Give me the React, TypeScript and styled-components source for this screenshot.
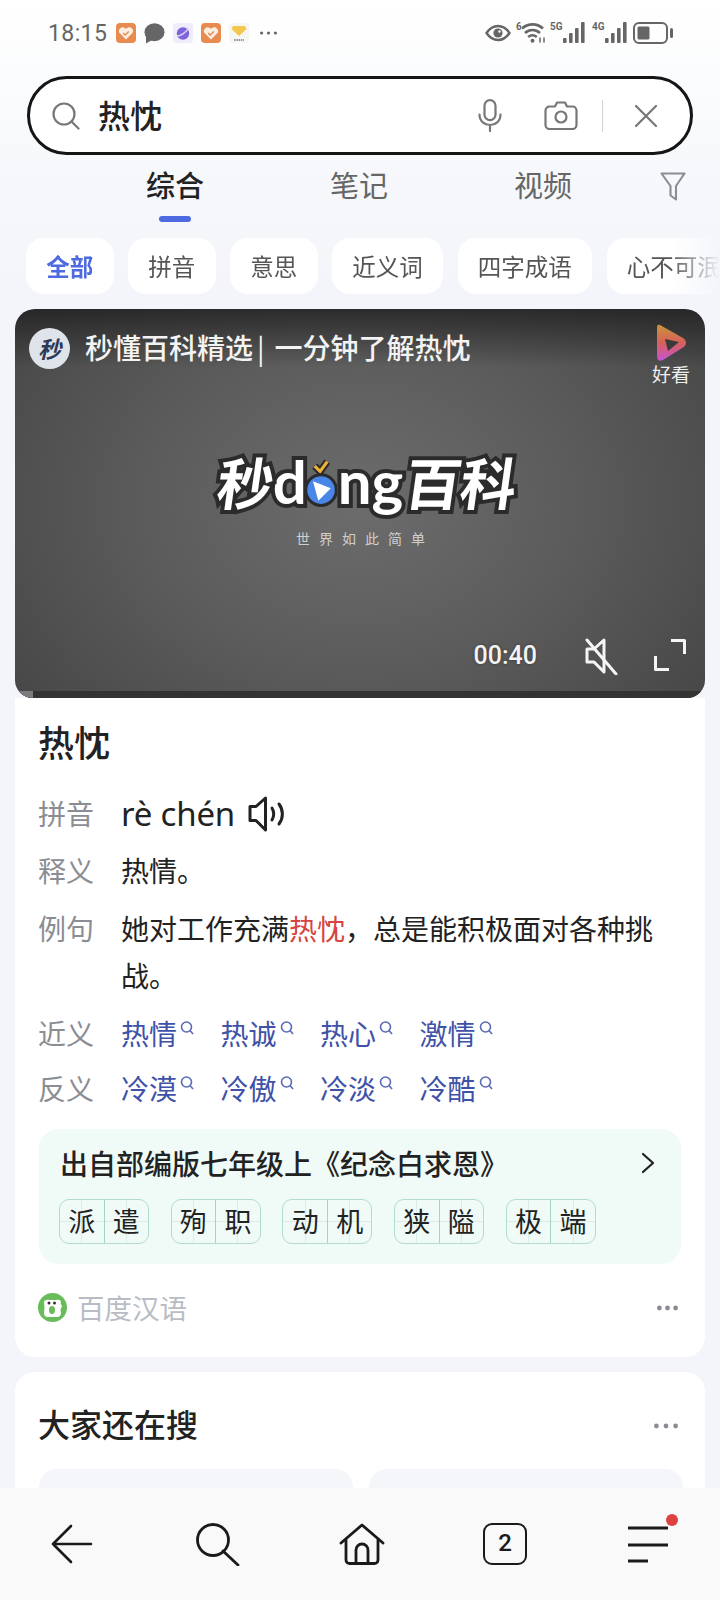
import React from "react";
import styled, { createGlobalStyle } from "styled-components";

const Global = createGlobalStyle`
  html, body { margin: 0; padding: 0; background: #f4f6fa; }
  body { font-family: "Noto Sans CJK SC", "Liberation Sans", sans-serif; text-spacing-trim: space-all; }
  * { box-sizing: border-box; }
  svg { display: block; flex: none; }
`;

const Screen = styled.div`
  width: 720px; height: 1600px; display: flex; flex-direction: column; overflow: hidden;
  background: linear-gradient(180deg, #ffffff 0, #f6f8fb 170px, #f3f5fa 300px);
`;
const Main = styled.main`flex: 1; min-height: 0; overflow: hidden;`;

const StatusBar = styled.div`
  height: 66px; display: flex; align-items: center; justify-content: space-between; padding: 0 47px 0 48px;
`;
const StatusGroup = styled.div`display: flex; align-items: center; gap: ${p => p.$gap ?? 8}px;`;
const Clock = styled.span`font: 400 23px Roboto, sans-serif; color: #666; letter-spacing: .4px; margin-right: 1px;`;
const DotsGap = styled.span`margin-left: 3px;`;
const NetLabel = styled.span`
  font: 700 10px/10px Roboto, sans-serif; color: #666; align-self: flex-start; margin: 0 1px 0 0; width: ${p => p.$w}px;
`;
const NetCell = styled.div`display: flex; align-items: flex-start; height: 22px; margin-left: ${p => p.$ml}px;`;
const BatterySlot = styled.span`margin-left: 6px;`;

const SearchBar = styled.div`
  margin: 10px 27px 0; height: 79px; border: 3.5px solid #151515; border-radius: 40px; background: #fff;
  display: flex; align-items: center; padding: 0 32px 0 22px;
`;
const SearchText = styled.span`
  font-size: 32px; font-weight: 500; color: #222; margin: 0 0 3px 18px; flex: 1; line-height: 40px;
`;
const CameraSlot = styled.span`margin-left: 42px;`;
const SearchDivider = styled.span`width: 1.5px; height: 32px; background: #d4d4d4; margin: 0 31px 0 24px;`;

const Tabs = styled.nav`display: flex; padding-left: 83px; height: 69px;`;
const Tab = styled.div`
  width: 184px; display: flex; flex-direction: column; align-items: center;
  font-size: 29px; line-height: 40px; padding-top: 9px; font-weight: ${p => (p.$active ? 500 : 400)};
  color: ${p => (p.$active ? "#222" : "#666")};
`;
const TabMark = styled.span`width: 32px; height: 6px; border-radius: 3px; background: #4e6ae0; margin-top: 12px;`;
const FilterSlot = styled.div`padding: 17px 0 0 25px;`;

const Chips = styled.div`
  display: flex; gap: 14.5px; padding-left: 26px; margin-top: 14px; overflow: hidden; white-space: nowrap;
  -webkit-mask-image: linear-gradient(90deg, #000 670px, transparent 720px);
  mask-image: linear-gradient(90deg, #000 670px, transparent 720px);
`;
const Chip = styled.div`
  flex: none; height: 56px; border-radius: 18px; background: #fff; padding: 0 20.25px; font-size: 23.5px; line-height: 56px;
  font-weight: ${p => (p.$active ? 700 : 400)}; color: ${p => (p.$active ? "#4e6ae0" : "#555")};
`;

const Video = styled.section`
  margin: 15px 15px 0; height: 389px; border-radius: 20px 20px 18px 18px; overflow: hidden; display: flex; flex-direction: column;
  background:
    linear-gradient(180deg, rgba(25,25,25,.7) 0, rgba(25,25,25,0) 58px),
    radial-gradient(ellipse 420px 320px at 50% 50%, #6c6c6c 0, #5c5c5c 50%, #484848 100%);
`;
const VideoHead = styled.div`height: 137px; display: flex; align-items: flex-start; padding: 19px 15px 0 14px;`;
const Avatar = styled.div`
  width: 41px; height: 41px; border-radius: 50%; background: #dfe3ea; color: #2d3a55; font-size: 23px; font-weight: 700;
  font-style: italic; line-height: 41px; text-align: center; flex: none;
`;
const VideoTitle = styled.div`
  flex: 1; color: #f3f3f3; font-size: 28px; line-height: 38px; font-weight: 500; margin-left: 15px; white-space: nowrap;
`;
const TitleBar = styled.span`margin: 0 10px 0 4px; font-weight: 400;`;
const Haokan = styled.div`
  width: 38px; margin: -4px 0 0 0; display: flex; flex-direction: column; align-items: center;
  color: #eee; font-size: 19px; line-height: 24px;
`;
const VideoCenter = styled.div`flex: 1; display: flex; flex-direction: column; align-items: center;`;
const Logo = styled.div`
  display: flex; align-items: center; height: 70px; margin-left: 14px;
  font-weight: 700; color: #fff; paint-order: stroke fill; -webkit-text-stroke: 8px #2b2b2b;
`;
const LogoCjk = styled.span`font-size: 56px; line-height: 70px; letter-spacing: -1px; transform: skewX(-8deg); display: inline-block;`;
const LogoLatin = styled.span`
  font: 700 60px/70px Lato, sans-serif; letter-spacing: 0; margin: ${p => p.$m}; display: inline-block;
`;
const Tagline = styled.div`
  margin: 12px 0 0 10px; color: #cfcfcf; font-size: 14px; line-height: 20px; letter-spacing: 9px;
`;
const Controls = styled.div`height: 54px; display: flex; align-items: flex-start; padding: 0 19px 0 0; justify-content: flex-end;`;
const Duration = styled.span`
  font: 500 25px/38px Roboto, sans-serif; color: #f4f4f4; margin-right: 47px; text-shadow: 0 0 3px rgba(0,0,0,.4);
`;
const FullscreenSlot = styled.span`margin: 2px 0 0 36px;`;
const ProgressTrack = styled.div`height: 7px; background: #333; flex: none;`;
const ProgressFill = styled.div`height: 100%; background: #7c7c7c;`;

const Card = styled.section`
  margin: 0 15px; padding: 18px 24px 35px; background: #fff; border-radius: 0 0 20px 20px;
`;
const WordTitle = styled.h1`margin: 0 0 0 -1px; font-size: 36px; line-height: 50px; font-weight: 500; color: #222;`;
const Row = styled.div`display: flex; margin: ${p => p.$top}px 0 0 -1px; font-size: 28px; line-height: 47px; color: #222;`;
const Label = styled.span`width: 83px; flex: none; color: #8a8d93;`;
const Pinyin = styled.span`font: 400 33px/47px "Noto Sans", sans-serif; color: #222; letter-spacing: -.2px;`;
const SpeakerSlot = styled.span`margin: 6px 0 0 13px;`;
const Value = styled.div`width: 540px;`;
const Hot = styled.span`color: #d6453f;`;
const LinkItem = styled.span`width: 99.5px; display: flex; color: #4052a8; flex: none;`;
const LinkMark = styled.span`margin: 11px 0 0 3px;`;

const Source = styled.div`
  margin-top: 17px; height: 135px; border-radius: 20px; background: #f0faf7; padding: 14px 20px 0 21px;
`;
const SourceHead = styled.div`
  display: flex; align-items: center; justify-content: space-between; font-size: 28px; line-height: 40px;
  font-weight: 500; color: #222; padding-right: 6px;
`;
const WordList = styled.div`display: flex; gap: 21.7px; margin: 16px 0 0 -1px;`;
const WordBox = styled.div`
  width: 90px; height: 45px; border: 1.3px solid #b1dccf; border-radius: 10px; display: flex; overflow: hidden;
`;
const WordCell = styled.span`
  flex: 1; text-align: center; font-size: 27px; line-height: 41px; color: #222;
  background:
    linear-gradient(#d9ece6, #d9ece6) 0 50% / 100% 1px no-repeat,
    linear-gradient(#d9ece6, #d9ece6) 50% 0 / 1px 100% no-repeat;
  &:first-child { border-right: 1.3px solid #a5d3c5; }
`;

const Attribution = styled.div`display: flex; align-items: center; justify-content: space-between; margin-top: 29px; height: 29px; padding-right: 3px;`;
const AttrLeft = styled.div`display: flex; align-items: center; gap: 10px; margin-left: -1px; color: #b8bcc4; font-size: 27.5px; line-height: 27px;`;

const SecondCard = styled.section`
  margin: 15px 15px 0; padding: 31px 24px 0; background: #fff; border-radius: 20px 20px 0 0;
`;
const SecondHead = styled.div`display: flex; align-items: center; justify-content: space-between;`;
const SecondTitle = styled.h2`margin: 0 0 0 -1px; font-size: 32px; line-height: 40px; font-weight: 500; color: #222;`;
const HeadDots = styled.span`padding: 5px 3px 0 0;`;
const Suggest = styled.div`display: grid; grid-template-columns: 314px 314px; gap: 16px; margin-top: 26px;`;
const SuggestCard = styled.div`height: 120px; border-radius: 18px; background: #f5f6fa;`;

const BottomNav = styled.nav`
  height: 112px; flex: none; background: #f9f9f9; display: grid; grid-template-columns: repeat(5, 144px); align-items: center; justify-items: center;
`;
const NavSlot = styled.span`margin-left: ${p => p.$ml}px;`;

const HeartTile = () => (
  <svg width="20" height="20" viewBox="0 0 20 20">
    <rect width="20" height="20" rx="4" fill="#e88b4f" />
    <path d="M10 16.5 3.8 10.3a3.7 3.7 0 0 1 5.2-5.2l1 1 1-1a3.7 3.7 0 0 1 5.2 5.2z" fill="#fbeee3" />
    <path d="m7.2 10 2 2 3.6-3.6" fill="none" stroke="#e88b4f" strokeWidth="1.4" />
  </svg>
);
const Bubble = () => (
  <svg width="21" height="21" viewBox="0 0 21 21">
    <ellipse cx="10.5" cy="9.2" rx="10" ry="9" fill="#666" />
    <path d="M2 13v7.5L8 17z" fill="#666" />
  </svg>
);
const PlanetTile = () => (
  <svg width="20" height="20" viewBox="0 0 20 20">
    <rect width="20" height="20" rx="4" fill="#efedfb" />
    <circle cx="10" cy="10.5" r="6.2" fill="#7d63dc" />
    <path d="M4 13c4 0 8-3 11.5-7.5" stroke="#d9d0fa" strokeWidth="1.4" fill="none" />
  </svg>
);
const GemTile = () => (
  <svg width="20" height="20" viewBox="0 0 20 20">
    <rect width="20" height="20" rx="4" fill="#f6f6f2" />
    <path d="M4 3h12l1.5 3L10 13 2.500 6z" fill="#f4c84e" />
    <path d="M5 17h10" stroke="#6d7590" strokeWidth="1.4" strokeDasharray="1.5 .8" />
  </svg>
);
const Dots = ({ w = 17, c = "#666", r = 1.6 }: { w?: number; c?: string; r?: number }) => (
  <svg width={w} height="6" viewBox={`0 0 ${w} 6`}>
    <circle cx={r} cy="3" r={r} fill={c} />
    <circle cx={w / 2} cy="3" r={r} fill={c} />
    <circle cx={w - r} cy="3" r={r} fill={c} />
  </svg>
);
const Eye = () => (
  <svg width="26" height="18" viewBox="0 0 26 18" fill="none">
    <path d="M1.5 9C5 3.800 9 2 13 2s8 1.800 11.500 7C21 14.200 17 16 13 16S5 14.200 1.500 9z" stroke="#666" strokeWidth="2.400" />
    <circle cx="13" cy="9" r="4.600" fill="#666" />
    <circle cx="14.500" cy="7.500" r="1.200" fill="#fff" />
  </svg>
);
const Wifi = () => (
  <svg width="24" height="21" viewBox="0 0 24 21" fill="none" stroke="#666" strokeWidth="2.600">
    <path d="M0 6.500c6-5.500 15-5.500 21 0" />
    <path d="M3 11c4.500-4 10.500-4 15 0" />
    <path d="M6.200 15c2.800-2.300 5.800-2.300 8.600 0" />
    <circle cx="10.500" cy="18.800" r="2" fill="#666" stroke="none" />
    <path d="M18 15.500v5M22 20.500v-5" strokeWidth="1.500" />
  </svg>
);
const Bars = () => (
  <svg width="22" height="21" viewBox="0 0 22 21" fill="#666">
    <rect x="0" y="16" width="3.600" height="5" rx="1" />
    <rect x="6" y="11" width="3.600" height="10" rx="1" />
    <rect x="12" y="6" width="3.600" height="15" rx="1" />
    <rect x="18" y="0" width="3.600" height="21" rx="1" />
  </svg>
);
const Battery = () => (
  <svg width="40" height="22" viewBox="0 0 40 22" fill="none">
    <rect x="1" y="1" width="33" height="20" rx="5" stroke="#666" strokeWidth="2" />
    <rect x="4.500" y="4.500" width="12" height="13" rx="1.500" fill="#666" />
    <rect x="37" y="6" width="3" height="10" rx="1.500" fill="#666" />
  </svg>
);
const SearchIcon = ({ s = 28, w = 2.2, c = "#777" }: { s?: number; w?: number; c?: string }) => (
  <svg width={s} height={s} viewBox="0 0 28 28" fill="none" stroke={c} strokeWidth={w} strokeLinecap="round">
    <circle cx="12" cy="12" r="10.500" />
    <path d="m19.500 19.500 7 7" />
  </svg>
);
const Mic = () => (
  <svg width="24" height="33" viewBox="0 0 24 33" fill="none" stroke="#777" strokeWidth="2.200" strokeLinecap="round">
    <rect x="6.500" y="1.200" width="11" height="20" rx="5.500" />
    <path d="M1.500 15.500c0 14 21 14 21 0M12 26.500v5.500" />
  </svg>
);
const Camera = () => (
  <svg width="34" height="29" viewBox="0 0 34 29" fill="none" stroke="#777" strokeWidth="2.200" strokeLinejoin="round">
    <path d="M11 5.500 13 1.500h8l2 4h5.500a4 4 0 0 1 4 4v14.500a4 4 0 0 1-4 4h-23a4 4 0 0 1-4-4V9.500a4 4 0 0 1 4-4z" />
    <circle cx="17" cy="16" r="5.500" />
  </svg>
);
const Close = () => (
  <svg width="24" height="24" viewBox="0 0 24 24" stroke="#777" strokeWidth="2.200" strokeLinecap="round">
    <path d="M2 2l20 20M22 2 2 22" />
  </svg>
);
const Filter = () => (
  <svg width="26" height="29" viewBox="0 0 26 29" fill="none" stroke="#8a8d93" strokeWidth="2.100" strokeLinejoin="round">
    <path d="M1.500 1.500h23L16 14v13.500l-5.500-4V14z" />
  </svg>
);
const HaokanMark = () => (
  <svg width="32" height="38" viewBox="0 0 32 38">
    <defs>
      <linearGradient id="hk" x1="0" y1="0" x2="0" y2="1">
        <stop offset="0" stopColor="#c9953a" />
        <stop offset=".5" stopColor="#d8605a" />
        <stop offset="1" stopColor="#c653d6" />
      </linearGradient>
    </defs>
    <path d="M5 1 28 14c4 2.500 4 7 0 9.500L8 36c-3 2-6 0-6-3V4c0-3 1-4 3-3z" fill="url(#hk)" />
    <path d="M10 15 24 18l-11 9z" fill="#3a3a3a" />
  </svg>
);
const LogoPlay = () => (
  <svg width="32" height="48" viewBox="0 0 36 54" style={{ margin: "4px 1px 0 -2px" }}>
    <path d="M11 8l6 6 8-11" fill="none" stroke="#2b2b2b" strokeWidth="8" />
    <path d="M11 8l6 6 8-11" fill="none" stroke="#f0b33a" strokeWidth="3.500" />
    <circle cx="18" cy="35" r="19" fill="#2b2b2b" />
    <circle cx="18" cy="35" r="15.500" fill="#4a86e8" />
    <path d="M9 25 29 33 15 47z" fill="#fff" />
  </svg>
);
const MuteIcon = () => (
  <svg width="34" height="38" viewBox="0 0 34 38" fill="none" stroke="#f5f5f5" strokeWidth="3" strokeLinejoin="round" strokeLinecap="round">
    <path d="M20 3 10 12H3v13h7l10 10z" />
    <path d="M3 3l29 34" />
  </svg>
);
const Fullscreen = () => (
  <svg width="32" height="32" viewBox="0 0 32 32" fill="none" stroke="#f5f5f5" strokeWidth="3" strokeLinejoin="round">
    <path d="M17 1.500h13.500V15M1.500 17v13.500H15" />
  </svg>
);
const Speaker = () => (
  <svg width="38" height="36" viewBox="0 0 38 36" fill="none" stroke="#222" strokeWidth="3" strokeLinejoin="round" strokeLinecap="round">
    <path d="M17.500 2 8 10.500H2v14h6L17.500 34z" />
    <path d="M24 12c2 3.500 2 8.500 0 12M31 8c4.500 6 4.500 14 0 20" />
  </svg>
);
const LinkSearch = () => (
  <svg width="14" height="14" viewBox="0 0 14 14" fill="none" stroke="#5a6ab5" strokeWidth="1.600">
    <circle cx="6.500" cy="6" r="5" />
    <path d="m10 9.500 3 3.500" />
  </svg>
);
const Chevron = () => (
  <svg width="14" height="22" viewBox="0 0 14 22" fill="none" stroke="#222" strokeWidth="2.200" strokeLinecap="round" strokeLinejoin="round">
    <path d="M2 2l10 9-10 9" />
  </svg>
);
const HanyuMark = () => (
  <svg width="29" height="29" viewBox="0 0 29 29">
    <circle cx="14.500" cy="14.500" r="14.500" fill="#68bd5a" />
    <path d="M6 8c3-2 6-1 9-1s6-1 8 1c-1 2 0 3 1 5-1 3-2 3-1 6 0 3-1 5-4 5H10c-3 0-4-2-4-5 1-3 0-8 0-11z" fill="#fff" />
    <circle cx="11" cy="10" r="1.500" fill="#333" />
    <circle cx="16.500" cy="10" r="1.500" fill="#333" />
    <ellipse cx="14" cy="17" rx="3" ry="4" fill="#68bd5a" />
  </svg>
);
const NavBack = () => (
  <svg width="42" height="40" viewBox="0 0 42 40" fill="none" stroke="#1a1a1a" strokeWidth="2.600" strokeLinecap="round" strokeLinejoin="round">
    <path d="M20 2 2 20l18 18M2 20h38" />
  </svg>
);
const NavSearch = () => (
  <svg width="44" height="43" viewBox="0 0 44 43" fill="none" stroke="#1a1a1a" strokeWidth="2.800" strokeLinecap="round">
    <circle cx="17" cy="17" r="15.500" />
    <path d="m27 28 15 14" />
  </svg>
);
const NavHome = () => (
  <svg width="46" height="42" viewBox="0 0 46 42" fill="none" stroke="#1a1a1a" strokeWidth="2.800" strokeLinecap="round" strokeLinejoin="round">
    <path d="M2 20 23 2l21 18" />
    <path d="M7 17v20a3.500 3.500 0 0 0 3.500 3.500h25A3.500 3.500 0 0 0 39 37V17" />
    <path d="M17 39V27a6 6 0 0 1 12 0v12" />
  </svg>
);
const NavTabsFrame = styled.div`
  width: 44px; height: 42px; border: 2.800px solid #1a1a1a; border-radius: 9px; text-align: center; margin-left: 2px;
  font: 500 24px/36px Roboto, sans-serif; color: #1a1a1a;
`;
const NavMenu = () => (
  <svg width="54" height="50" viewBox="0 0 54 50" fill="none" stroke="#1a1a1a" strokeWidth="2.800" style={{ margin: "-10px 0 0 13px" }}>
    <path d="M0 14h40M0 31h40M0 47h20" />
    <circle cx="44" cy="6" r="6" fill="#dc4040" stroke="none" />
  </svg>
);

const chips = ["拼音", "意思", "近义词", "四字成语", "心不可泯"];
const near = ["热情", "热诚", "热心", "激情"];
const far = ["冷漠", "冷傲", "冷淡", "冷酷"];
const words = ["派遣", "殉职", "动机", "狭隘", "极端"];

const LinkRow = ({ label, items, top }: { label: string; items: string[]; top: number }) => (
  <Row $top={top}>
    <Label>{label}</Label>
    {items.map(w => (
      <LinkItem key={w}>
        {w}
        <LinkMark><LinkSearch /></LinkMark>
      </LinkItem>
    ))}
  </Row>
);

export default function App() {
  return (
    <Screen>
      <Global />
      <Main>
        <StatusBar>
          <StatusGroup>
            <Clock>18:15</Clock>
            <HeartTile />
            <Bubble />
            <PlanetTile />
            <HeartTile />
            <GemTile />
            <DotsGap><Dots /></DotsGap>
          </StatusGroup>
          <StatusGroup $gap={0}>
            <Eye />
            <NetCell $ml={5}><NetLabel $w={5}>6</NetLabel><Wifi /></NetCell>
            <NetCell $ml={4}><NetLabel $w={12}>5G</NetLabel><Bars /></NetCell>
            <NetCell $ml={7}><NetLabel $w={12}>4G</NetLabel><Bars /></NetCell>
            <BatterySlot><Battery /></BatterySlot>
          </StatusGroup>
        </StatusBar>

        <SearchBar>
          <SearchIcon />
          <SearchText>热忱</SearchText>
          <Mic />
          <CameraSlot><Camera /></CameraSlot>
          <SearchDivider />
          <Close />
        </SearchBar>

        <Tabs>
          <Tab $active>综合<TabMark /></Tab>
          <Tab>笔记</Tab>
          <Tab>视频</Tab>
          <FilterSlot><Filter /></FilterSlot>
        </Tabs>

        <Chips>
          <Chip $active>全部</Chip>
          {chips.map(c => <Chip key={c}>{c}</Chip>)}
        </Chips>

        <Video>
          <VideoHead>
            <Avatar>秒</Avatar>
            <VideoTitle>秒懂百科精选<TitleBar>|</TitleBar>一分钟了解热忱</VideoTitle>
            <Haokan><HaokanMark />好看</Haokan>
          </VideoHead>
          <VideoCenter>
            <Logo>
              <LogoCjk>秒</LogoCjk>
              <LogoLatin $m="0">d</LogoLatin>
              <LogoPlay />
              <LogoLatin $m="0 3px 0 0">ng</LogoLatin>
              <LogoCjk>百科</LogoCjk>
            </Logo>
            <Tagline>世界如此简单</Tagline>
          </VideoCenter>
          <Controls>
            <Duration>00:40</Duration>
            <MuteIcon />
            <FullscreenSlot><Fullscreen /></FullscreenSlot>
          </Controls>
          <ProgressTrack><ProgressFill style={{ width: 18 }} /></ProgressTrack>
        </Video>

        <Card>
          <WordTitle>热忱</WordTitle>
          <Row $top={24}>
            <Label>拼音</Label>
            <Pinyin>rè chén</Pinyin>
            <SpeakerSlot><Speaker /></SpeakerSlot>
          </Row>
          <Row $top={10}><Label>释义</Label>热情。</Row>
          <Row $top={11}>
            <Label>例句</Label>
            <Value>她对工作充满<Hot>热忱</Hot>，总是能积极面对各种挑战。</Value>
          </Row>
          <LinkRow label="近义" items={near} top={11} />
          <LinkRow label="反义" items={far} top={8} />

          <Source>
            <SourceHead>出自部编版七年级上《纪念白求恩》<Chevron /></SourceHead>
            <WordList>
              {words.map(w => (
                <WordBox key={w}>
                  <WordCell>{w[0]}</WordCell>
                  <WordCell>{w[1]}</WordCell>
                </WordBox>
              ))}
            </WordList>
          </Source>

          <Attribution>
            <AttrLeft><HanyuMark />百度汉语</AttrLeft>
            <Dots w={21} c="#8a8d93" r={2.4} />
          </Attribution>
        </Card>

        <SecondCard>
          <SecondHead>
            <SecondTitle>大家还在搜</SecondTitle>
            <HeadDots><Dots w={24} c="#8a8d93" r={2.4} /></HeadDots>
          </SecondHead>
          <Suggest>
            <SuggestCard />
            <SuggestCard />
          </Suggest>
        </SecondCard>
      </Main>

      <BottomNav>
        <NavBack />
        <NavSlot $ml={4}><NavSearch /></NavSlot>
        <NavSlot $ml={4}><NavHome /></NavSlot>
        <NavTabsFrame>2</NavTabsFrame>
        <NavMenu />
      </BottomNav>
    </Screen>
  );
}
